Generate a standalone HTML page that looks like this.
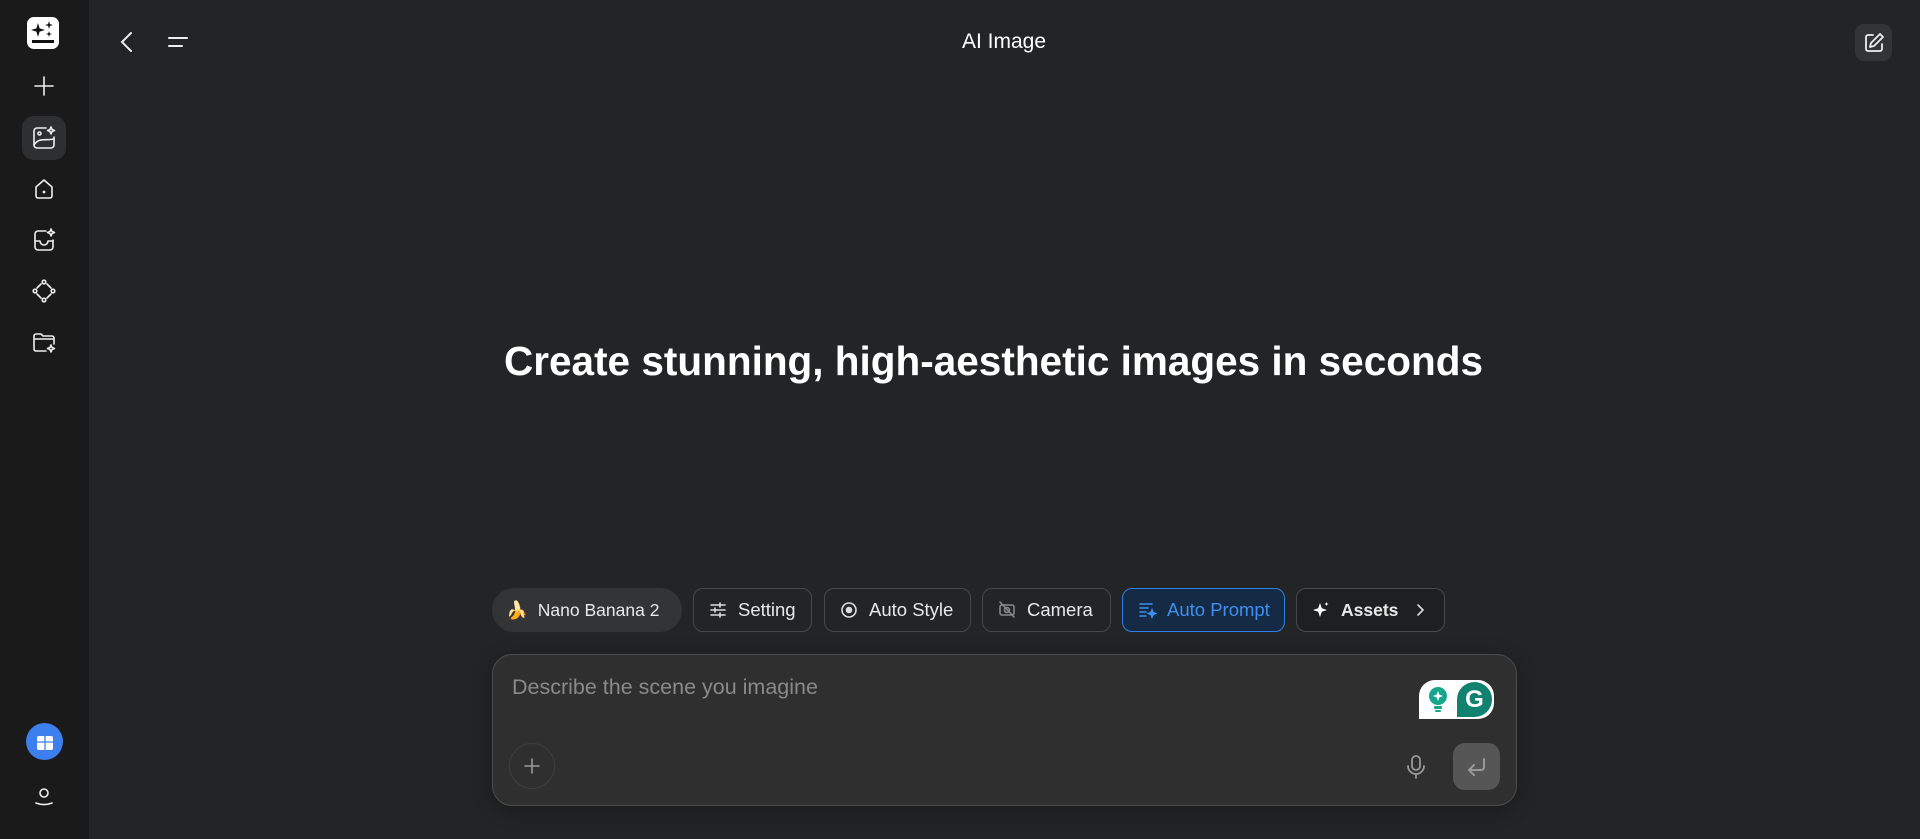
<!DOCTYPE html>
<html><head><meta charset="utf-8"><style>
*{margin:0;padding:0;box-sizing:border-box}
body{width:1920px;height:839px;background:#232425;font-family:"Liberation Sans",sans-serif;color:#fff;position:relative;overflow:hidden}
.side{position:absolute;left:0;top:0;width:89px;height:839px;background:#1a1a1a}
.ic{position:absolute;left:22px;width:44px;height:44px;display:flex;align-items:center;justify-content:center}
.ic svg{width:26px;height:26px;fill:none;stroke:#eee;stroke-width:1.6;stroke-linecap:round;stroke-linejoin:round}
.chip{position:absolute;top:588px;height:44px;border:1px solid #47484a;border-radius:10px;display:flex;align-items:center;padding-left:14px;font-size:18.5px;color:#e8e8e8;gap:10px}
.chip svg{width:20px;height:20px;fill:none;stroke:#ddd;stroke-width:1.6;stroke-linecap:round}
</style></head><body>
<div class="side">
 <div style="position:absolute;left:27px;top:17px;width:32px;height:32px;background:#fff;border-radius:7px">
  <svg width="32" height="32" viewBox="0 0 32 32"><path d="M11 6 L12.6 11.4 L18 13 L12.6 14.6 L11 20 L9.4 14.6 L4 13 L9.4 11.4Z" fill="#111"/><path d="M22 4 L22.9 7.1 L26 8 L22.9 8.9 L22 12 L21.1 8.9 L18 8 L21.1 7.1Z" fill="#111"/><path d="M22 14 L22.7 16.3 L25 17 L22.7 17.7 L22 20 L21.3 17.7 L19 17 L21.3 16.3Z" fill="#111"/><rect x="5" y="23" width="22" height="3" fill="#111"/></svg>
 </div>
 <div class="ic" style="top:64px"><svg viewBox="0 0 26 26"><path d="M13 4v18M4 13h18"/></svg></div>
 <div class="ic" style="top:116px;background:#2e2f30;border-radius:12px"><svg viewBox="0 0 26 26"><path d="M15 3H6a3 3 0 0 0-3 3v14a3 3 0 0 0 3 3h14a3 3 0 0 0 3-3v-8"/><circle cx="8.5" cy="8.5" r="1.5"/><path d="M3 20c5-8 11-4 20-6"/><path d="M20 2l1 2.5 2.5 1-2.5 1-1 2.5-1-2.5-2.5-1 2.5-1z"/></svg></div>
 <div class="ic" style="top:167px"><svg viewBox="0 0 26 26"><path d="M5 11l8-7 8 7v9a2 2 0 0 1-2 2H7a2 2 0 0 1-2-2z"/><circle cx="13" cy="16" r=".6" fill="#eee"/></svg></div>
 <div class="ic" style="top:218px"><svg viewBox="0 0 26 26"><path d="M15 4H7a3 3 0 0 0-3 3v13a3 3 0 0 0 3 3h12a3 3 0 0 0 3-3v-7"/><path d="M4 14h5a4 4 0 0 0 8 0h5"/><path d="M20 2l1 2.5 2.5 1-2.5 1-1 2.5-1-2.5-2.5-1 2.5-1z"/></svg></div>
 <div class="ic" style="top:269px"><svg viewBox="0 0 26 26"><circle cx="13" cy="4" r="1.8"/><circle cx="13" cy="22" r="1.8"/><circle cx="4" cy="13" r="1.8"/><circle cx="22" cy="13" r="1.8"/><path d="M6 10l4-4M16 6l4 4M20 16l-4 4M10 20l-4-4"/></svg></div>
 <div class="ic" style="top:321px"><svg viewBox="0 0 26 26"><path d="M15 21H5a2 2 0 0 1-2-2V6a2 2 0 0 1 2-2h5l2 2h9a2 2 0 0 1 2 2v6M3 9h20"/><path d="M20 15l1 2.5 2.5 1-2.5 1-1 2.5-1-2.5-2.5-1 2.5-1z"/></svg></div>
 <div style="position:absolute;left:26px;top:723px;width:37px;height:37px;border-radius:50%;background:#3d7fee;display:flex;align-items:center;justify-content:center"><svg width="20" height="20" viewBox="0 0 20 20"><rect x="2" y="4" width="16" height="14" rx="2" fill="#fff"/><path d="M10 4v14M2 10h16M7 2l3 2 3-2" stroke="#3d7fee" stroke-width="1.3" fill="none"/></svg></div>
 <div class="ic" style="top:773px"><svg viewBox="0 0 26 26"><circle cx="13" cy="11" r="4"/><path d="M5 21c5 2 11 2 16 0"/></svg></div>
</div>
<svg style="position:absolute;left:117px;top:30px" width="20" height="24" viewBox="0 0 20 24" fill="none" stroke="#eee" stroke-width="2" stroke-linecap="round"><path d="M14 3L5 12l9 9"/></svg>
<svg style="position:absolute;left:166px;top:32px" width="24" height="20" viewBox="0 0 24 20" fill="none" stroke="#eee" stroke-width="2" stroke-linecap="round"><path d="M3 6h18M3 14h13"/></svg>
<div style="position:absolute;left:904px;width:200px;top:30px;text-align:center;font-size:21px">AI Image</div>
<div style="position:absolute;left:1855px;top:24px;width:37px;height:37px;border-radius:9px;background:#333435;display:flex;align-items:center;justify-content:center"><svg width="24" height="24" viewBox="0 0 24 24" fill="none" stroke="#eee" stroke-width="1.8" stroke-linecap="round" stroke-linejoin="round"><path d="M11 4H6a2 2 0 0 0-2 2v12a2 2 0 0 0 2 2h12a2 2 0 0 0 2-2v-5"/><path d="M18 3l3 3-9 9-4 1 1-4z"/></svg></div>
<div style="position:absolute;left:89px;right:0;top:338px;text-align:center;font-size:40.5px;font-weight:bold;padding-right:22px">Create stunning, high-aesthetic images in seconds</div>

<div class="chip" style="left:492px;width:190px;background:#333435;border:none;border-radius:22px;padding-left:14px;font-size:17.5px">🍌<span>Nano Banana 2</span></div>
<div class="chip" style="left:693px;width:119px"><svg viewBox="0 0 20 20"><path d="M3 5h14M3 10h14M3 15h14"/><path d="M12 3v4M7 8v4M12 13v4" /></svg><span>Setting</span></div>
<div class="chip" style="left:824px;width:147px"><svg viewBox="0 0 20 20"><circle cx="10" cy="10" r="7"/><circle cx="10" cy="10" r="2.5" fill="#ddd"/></svg><span>Auto Style</span></div>
<div class="chip" style="left:982px;width:129px"><svg viewBox="0 0 20 20" style="stroke:#888"><rect x="3" y="5" width="14" height="10" rx="2"/><circle cx="10" cy="10" r="2.5"/><path d="M3 2l14 15"/></svg><span>Camera</span></div>
<div class="chip" style="left:1122px;width:163px;border-color:#2f7fe6;background:#152a44;color:#3f8ff0"><svg viewBox="0 0 20 20" style="stroke:#3f8ff0"><path d="M3 4h12M3 8h8M3 12h6M3 16h6"/><path d="M15 10l1 2.5 2.5 1-2.5 1-1 2.5-1-2.5-2.5-1 2.5-1z" fill="#3f8ff0"/></svg><span>Auto Prompt</span></div>
<div class="chip" style="left:1296px;width:149px;background:#1e1f20;font-size:17.5px"><svg viewBox="0 0 20 20"><path d="M9 3l1.8 5.2L16 10l-5.2 1.8L9 17l-1.8-5.2L2 10l5.2-1.8z" fill="#fff" stroke="none"/><path d="M15.5 2l.6 1.4 1.4.6-1.4.6-.6 1.4-.6-1.4-1.4-.6 1.4-.6z" fill="#fff" stroke="none"/></svg><span style="font-weight:bold">Assets</span><svg viewBox="0 0 20 20" style="margin-left:2px"><path d="M8 5l5 5-5 5"/></svg></div>

<div style="position:absolute;left:492px;top:654px;width:1025px;height:152px;background:#2f2f30;border:1px solid #4c4c4d;border-radius:20px;box-shadow:0 4px 20px rgba(0,0,0,.3)">
 <div style="position:absolute;left:19px;top:20px;font-size:21.5px;color:#8a8a8a">Describe the scene you imagine</div>
 <div style="position:absolute;left:16px;top:88px;width:46px;height:46px;border-radius:50%;border:1px solid #3e3e3f;display:flex;align-items:center;justify-content:center"><svg width="20" height="20" viewBox="0 0 20 20" fill="none" stroke="#999" stroke-width="1.6" stroke-linecap="round"><path d="M10 3v14M3 10h14"/></svg></div>
 <div style="position:absolute;left:926px;top:25px;width:75px;height:39px;background:#fff;border-radius:16px 16px 16px 0;">
  <svg style="position:absolute;left:6px;top:5px" width="26" height="30" viewBox="0 0 26 30"><circle cx="13" cy="11" r="9" fill="#15a68c"/><path d="M13 6l1.4 3.6L18 11l-3.6 1.4L13 16l-1.4-3.6L8 11l3.6-1.4z" fill="#fff"/><rect x="9" y="21" width="8" height="3" rx="1" fill="#15a68c"/><rect x="10" y="25" width="6" height="2" rx="1" fill="#15a68c"/></svg>
  <div style="position:absolute;left:38px;top:2px;width:35px;height:35px;border-radius:50% 50% 50% 0;background:#11826f;display:flex;align-items:center;justify-content:center;color:#fff;font-weight:bold;font-size:24px">G</div>
 </div>
 <svg style="position:absolute;left:910px;top:98px" width="26" height="28" viewBox="0 0 26 28" fill="none" stroke="#999" stroke-width="1.8" stroke-linecap="round"><rect x="9" y="3" width="8" height="14" rx="4"/><path d="M5 13a8 8 0 0 0 16 0M13 21v4"/></svg>
 <div style="position:absolute;left:960px;top:88px;width:47px;height:47px;border-radius:12px;background:#565657;display:flex;align-items:center;justify-content:center"><svg width="26" height="26" viewBox="0 0 26 26" fill="none" stroke="#999" stroke-width="2" stroke-linecap="round" stroke-linejoin="round"><path d="M20 5v8a3 3 0 0 1-3 3H6M10 11l-5 5 5 5"/></svg></div>
</div>
</body></html>
